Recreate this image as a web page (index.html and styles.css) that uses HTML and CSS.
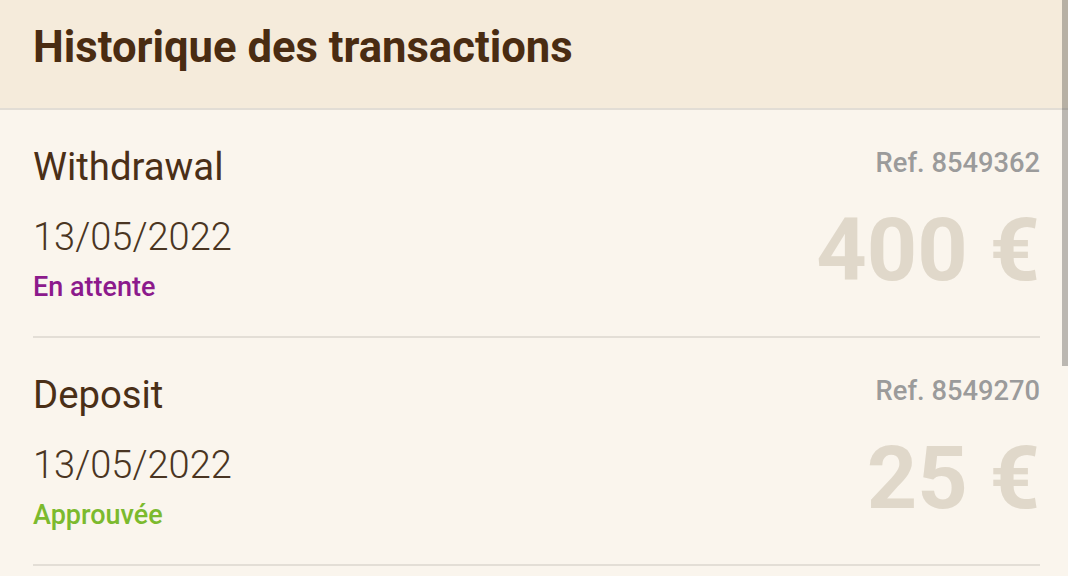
FILE: index.html
```html
<!DOCTYPE html>
<html lang="fr">
<head>
    <meta charset="UTF-8">
    <meta name="viewport" content="width=device-width, initial-scale=1.0">
    <title>Historique des transactions</title>
    <link rel="stylesheet" href="styles.css">
</head>
<body>
    <div class="page">
        <div class="header">
            <h1>Historique des transactions</h1>
        </div>

        <div class="liste">
            <div class="transaction">
                <div class="infos">
                    <div class="type">Withdrawal</div>
                    <div class="date">13/05/2022</div>
                    <div class="statut attente">En attente</div>
                </div>
                <div class="montant-bloc">
                    <div class="ref">Ref. 8549362</div>
                    <div class="montant">400 €</div>
                </div>
            </div>

            <div class="transaction">
                <div class="infos">
                    <div class="type">Deposit</div>
                    <div class="date">13/05/2022</div>
                    <div class="statut approuvee">Approuvée</div>
                </div>
                <div class="montant-bloc">
                    <div class="ref">Ref. 8549270</div>
                    <div class="montant">25 €</div>
                </div>
            </div>
        </div>

        <div class="scrollbar"></div>
    </div>
</body>
</html>
```

FILE: styles.css
```css
body {
    font-family: Roboto, "Liberation Sans", sans-serif;
    background-color: #faf5ed;
    margin: 0;
    padding: 0;
}

.page {
    position: relative;
    height: 576px;
    overflow: hidden;
}

.header {
    background-color: #f5ebdb;
    padding: 22px 33px 34px;
    border-bottom: 2px solid #e2ddd5;
}

.header h1 {
    margin: 0;
    font-size: 43.6px;
    line-height: 52px;
    font-weight: 700;
    color: #4a2c12;
}

.liste {
    padding: 0 28px 0 33px;
}

.transaction {
    display: flex;
    justify-content: space-between;
    padding: 34px 0 33px;
    border-bottom: 2px solid #e3ded6;
}

.infos {
    display: flex;
    flex-direction: column;
}

.type {
    font-size: 38.3px;
    line-height: 46px;
    color: #4a2f17;
}

.date {
    margin-top: 25px;
    font-size: 38px;
    line-height: 44px;
    font-weight: 300;
    color: #4a3522;
}

.statut {
    margin-top: 12px;
    font-size: 27px;
    line-height: 32px;
    font-weight: 500;
}

.attente {
    color: #8c1a8c;
}

.approuvee {
    color: #7cba2e;
}

.montant-bloc {
    display: flex;
    flex-direction: column;
    align-items: flex-end;
}

.ref {
    margin-top: 3px;
    font-size: 27.3px;
    line-height: 32px;
    font-weight: 500;
    color: #9b9b9b;
}

.montant {
    margin-top: 27px;
    font-size: 88px;
    line-height: 88px;
    font-weight: 700;
    color: #e0d8ca;
}

.scrollbar {
    position: absolute;
    top: 0;
    right: 0;
    width: 6px;
    height: 366px;
    background-color: rgba(0, 0, 0, 0.25);
}
```
